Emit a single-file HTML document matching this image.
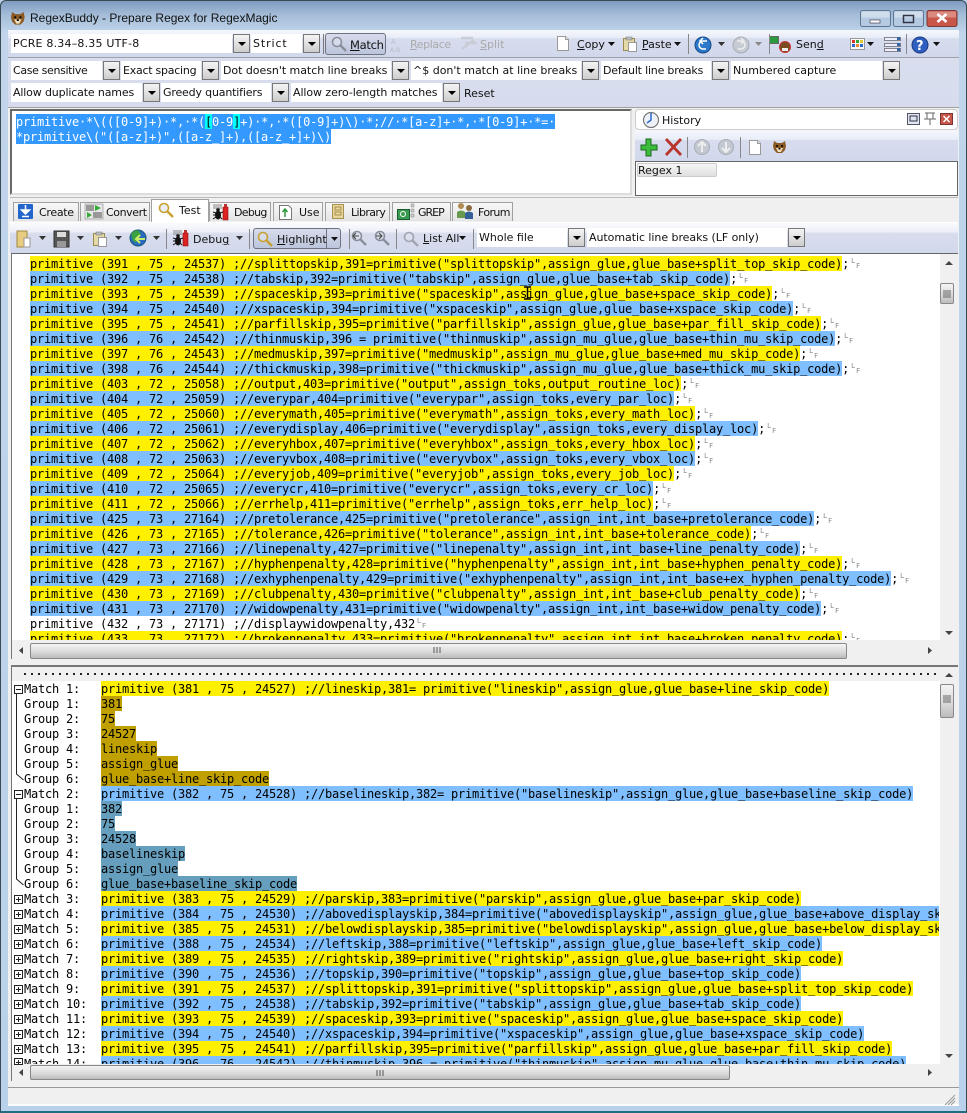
<!DOCTYPE html>
<html><head><meta charset="utf-8"><style>
html,body{margin:0;padding:0;width:967px;height:1113px;overflow:hidden;background:#b9d1ea}
div{position:absolute;box-sizing:border-box}
body{font:11px "DejaVu Sans","Liberation Sans",sans-serif;color:#111}
.c{background:#fff;height:19px;line-height:20px;padding-left:2px;white-space:pre}
.b{width:17px;height:19px;border:1px solid #777;background:linear-gradient(#f4f4f4,#cdcdcd)}
.b:after{content:"";position:absolute;left:4px;top:7px;border:4px solid transparent;border-top:4px solid #000;border-bottom:0}
.t{white-space:pre;line-height:15px;height:15px}
.g{color:#aaa}
.tab{top:202px;height:19px;background:linear-gradient(#f8f8f8,#e4e4e4);border:1px solid #a0a0a0;border-bottom:0}
.m{position:absolute;font:12px/17px "DejaVu Sans Mono","Liberation Mono",monospace;letter-spacing:-.224px;color:#000;overflow:hidden}
.r{position:static;height:15px;white-space:pre}
.r span{display:inline-block;height:15px;vertical-align:top}
.y{background:#fff000}.l{background:#80bfff}.dy{background:#bfa000}.dl{background:#669fbd}
em{display:inline-block;position:relative;width:13px;height:15px;vertical-align:top;font:normal 7px/7px "DejaVu Sans",sans-serif;color:#888;letter-spacing:0}
em i{position:absolute;left:2px;top:2px;font-style:normal}em b{position:absolute;left:7px;top:7px;font-weight:normal}
.lb{display:inline-block;width:77px;height:15px;vertical-align:top;font-style:normal}
.sb{background:#f0f0f0}
.th{background:linear-gradient(#f4f4f4,#d8d8d8 60%,#bcbcbc);border:1px solid #888;border-radius:2px}
</style></head><body>
<!-- frame -->
<div style="left:0;top:0;width:967px;height:1113px;background:linear-gradient(#7e9cc0 0,#a5bdd8 14px,#c0d5ea 32px,#b9d1ea 100%);border:1px solid #3a4a55;border-radius:6px 6px 0 0;border-bottom:2px solid #1f6f80"></div>
<div style="left:8px;top:30px;width:951px;height:1075px;background:#f0f0f0"></div>
<!-- toolbars -->
<div style="left:8px;top:30px;width:951px;height:28px;background:linear-gradient(#f5f7fc 0,#e9edf7 28%,#d7dcee 32%,#d2d8ec 100%);border-bottom:1px solid #a0a0a8"></div>
<div style="left:8px;top:58px;width:951px;height:50px;background:linear-gradient(#d9deef,#d6dcee);border-bottom:1px solid #a0a0a0"></div>
<div class="c" style="left:11px;top:34px;width:221px;letter-spacing:.2px">PCRE 8.34–8.35 UTF-8</div><div class="b" style="left:233px;top:34px"></div>
<div class="c" style="left:251px;top:34px;width:51px;letter-spacing:.9px">Strict</div><div class="b" style="left:303px;top:34px"></div>
<div style="left:323px;top:34px;width:1px;height:20px;background:#777"></div>
<div style="left:325px;top:33px;width:61px;height:22px;background:linear-gradient(#d7dcec,#bcc5dc);border:1px solid #6f7480;border-radius:3px"></div>
<div class="t" style="left:350px;top:38px;font-size:11.5px;letter-spacing:-.3px"><u>M</u>atch</div>
<div class="t g" style="left:410px;top:37px;letter-spacing:-.4px"><u>R</u>eplace</div>
<div class="t g" style="left:480px;top:37px"><u>S</u>plit</div>
<div class="t" style="left:577px;top:37px"><u>C</u>opy</div>
<div class="t" style="left:642px;top:37px"><u>P</u>aste</div>
<div class="t" style="left:796px;top:37px">Sen<u>d</u></div>
<!-- row 2 -->
<div class="c" style="left:11px;top:61px;width:91px;letter-spacing:-.35px">Case sensitive</div><div class="b" style="left:103px;top:61px"></div>
<div class="c" style="left:121px;top:61px;width:80px;letter-spacing:-.25px">Exact spacing</div><div class="b" style="left:202px;top:61px"></div>
<div class="c" style="left:221px;top:61px;width:170px;letter-spacing:-.04px">Dot doesn't match line breaks</div><div class="b" style="left:392px;top:61px"></div>
<div class="c" style="left:411px;top:61px;width:170px">^$ don't match at line breaks</div><div class="b" style="left:582px;top:61px"></div>
<div class="c" style="left:601px;top:61px;width:110px;letter-spacing:-.2px">Default line breaks</div><div class="b" style="left:712px;top:61px"></div>
<div class="c" style="left:731px;top:61px;width:151px">Numbered capture</div><div class="b" style="left:883px;top:61px"></div>
<div class="c" style="left:11px;top:83px;width:131px;letter-spacing:-.15px">Allow duplicate names</div><div class="b" style="left:143px;top:83px"></div>
<div class="c" style="left:161px;top:83px;width:110px;letter-spacing:-.17px">Greedy quantifiers</div><div class="b" style="left:272px;top:83px"></div>
<div class="c" style="left:291px;top:83px;width:151px;letter-spacing:-.08px">Allow zero-length matches</div><div class="b" style="left:443px;top:83px"></div>
<div class="t" style="left:464px;top:86px">Reset</div>
<!-- regex editor -->
<div style="left:10px;top:109px;width:622px;height:86px;background:#fff;border:2px solid #6a6a6a;border-right:2px solid #ddd;border-bottom:2px solid #ddd"></div>
<div class="m" style="left:16px;top:114px;width:600px;height:30px;color:#fff"><div class="r"><span style="background:#3399ff">primitive·*\(([0-9]+)·*,·*(<span style="background:#00ffff;color:#000">[</span>0-9<span style="background:#00ffff;color:#000">]</span>+)·*,·*([0-9]+)\)·*;//·*[a-z]+·*,·*[0-9]+·*=·</span></div><div class="r"><span style="background:#3399ff">*primitive\("([a-z]+)",([a-z_]+),([a-z_+]+)\)</span></div></div>
<!-- history -->
<div style="left:635px;top:109px;width:323px;height:21px;background:#fff;border:1px solid #ccc;border-radius:4px"></div>
<div class="t" style="left:662px;top:113px">History</div>
<div style="left:635px;top:130px;width:323px;height:31px;background:linear-gradient(#f5f7fc 0,#e9edf7 30%,#d7dcee 34%,#d2d8ec)"></div>
<div style="left:635px;top:161px;width:323px;height:35px;background:#fff;border:1px solid #666"></div>
<div style="left:637px;top:163px;width:80px;height:14px;background:linear-gradient(#f6f6f6,#e0e0e0);border:1px solid #ccc;border-radius:2px"></div>
<div class="t" style="left:638px;top:163px">Regex 1</div>
<!-- tabs -->
<div style="left:10px;top:197px;width:948px;height:1px;background:#bbb"></div>
<div style="left:10px;top:198px;width:948px;height:24px;background:#f0f0f0"></div>
<div class="tab" style="left:13px;width:66px"></div>
<div class="tab" style="left:80px;width:70px"></div>
<div class="tab" style="left:209px;width:62px"></div>
<div class="tab" style="left:273px;width:50px"></div>
<div class="tab" style="left:325px;width:65px"></div>
<div class="tab" style="left:392px;width:59px"></div>
<div class="tab" style="left:452px;width:61px"></div>
<div class="tab" style="left:151px;top:199px;width:58px;height:24px;background:#fff"></div>
<div class="t" style="left:39px;top:205px;letter-spacing:-.3px">Create</div>
<div class="t" style="left:106px;top:205px;letter-spacing:-.4px">Convert</div>
<div class="t" style="left:179px;top:203px">Test</div>
<div class="t" style="left:234px;top:205px;letter-spacing:-.7px">Debug</div>
<div class="t" style="left:299px;top:205px">Use</div>
<div class="t" style="left:351px;top:205px;letter-spacing:-.6px">Library</div>
<div class="t" style="left:418px;top:205px;letter-spacing:-1px">GREP</div>
<div class="t" style="left:478px;top:205px;letter-spacing:-.6px">Forum</div>
<!-- test toolbar -->
<div style="left:10px;top:222px;width:948px;height:31px;background:linear-gradient(#fbfbfe 0,#eef0f8 28%,#d8dded 36%,#d2d8ec);border-top:1px solid #fff"></div>
<div style="left:253px;top:228px;width:74px;height:21px;background:linear-gradient(#d7dcec,#bcc5dc);border:1px solid #6f7480;border-radius:3px 0 0 3px"></div>
<div style="left:327px;top:228px;width:14px;height:21px;background:linear-gradient(#d7dcec,#bcc5dc);border:1px solid #6f7480;border-left:0;border-radius:0 3px 3px 0"></div>
<div class="t" style="left:193px;top:232px">Debu<u>g</u></div>
<div class="t" style="left:277px;top:232px"><u>H</u>ighlight</div>
<div class="t" style="left:423px;top:231px"><u>L</u>ist All</div>
<div class="c" style="left:477px;top:228px;width:90px">Whole file</div><div class="b" style="left:568px;top:228px"></div>
<div class="c" style="left:587px;top:228px;width:200px;letter-spacing:-.05px">Automatic line breaks (LF only)</div><div class="b" style="left:788px;top:228px"></div>
<!-- top pane -->
<div style="left:11px;top:253px;width:947px;height:406px;background:#fff;border-top:1px solid #666;border-left:1px solid #777"></div>
<div class="m" style="left:30px;top:256px;width:909px;height:384px">
<div class="r"><span class="y">primitive (391 , 75 , 24537) ;//splittopskip,391=primitive("splittopskip",assign_glue,glue_base+split_top_skip_code)</span>;<em><i>L</i><b>F</b></em></div>
<div class="r"><span class="l">primitive (392 , 75 , 24538) ;//tabskip,392=primitive("tabskip",assign_glue,glue_base+tab_skip_code)</span>;<em><i>L</i><b>F</b></em></div>
<div class="r"><span class="y">primitive (393 , 75 , 24539) ;//spaceskip,393=primitive("spaceskip",assign_glue,glue_base+space_skip_code)</span>;<em><i>L</i><b>F</b></em></div>
<div class="r"><span class="l">primitive (394 , 75 , 24540) ;//xspaceskip,394=primitive("xspaceskip",assign_glue,glue_base+xspace_skip_code)</span>;<em><i>L</i><b>F</b></em></div>
<div class="r"><span class="y">primitive (395 , 75 , 24541) ;//parfillskip,395=primitive("parfillskip",assign_glue,glue_base+par_fill_skip_code)</span>;<em><i>L</i><b>F</b></em></div>
<div class="r"><span class="l">primitive (396 , 76 , 24542) ;//thinmuskip,396 = primitive("thinmuskip",assign_mu_glue,glue_base+thin_mu_skip_code)</span>;<em><i>L</i><b>F</b></em></div>
<div class="r"><span class="y">primitive (397 , 76 , 24543) ;//medmuskip,397=primitive("medmuskip",assign_mu_glue,glue_base+med_mu_skip_code)</span>;<em><i>L</i><b>F</b></em></div>
<div class="r"><span class="l">primitive (398 , 76 , 24544) ;//thickmuskip,398=primitive("thickmuskip",assign_mu_glue,glue_base+thick_mu_skip_code)</span>;<em><i>L</i><b>F</b></em></div>
<div class="r"><span class="y">primitive (403 , 72 , 25058) ;//output,403=primitive("output",assign_toks,output_routine_loc)</span>;<em><i>L</i><b>F</b></em></div>
<div class="r"><span class="l">primitive (404 , 72 , 25059) ;//everypar,404=primitive("everypar",assign_toks,every_par_loc)</span>;<em><i>L</i><b>F</b></em></div>
<div class="r"><span class="y">primitive (405 , 72 , 25060) ;//everymath,405=primitive("everymath",assign_toks,every_math_loc)</span>;<em><i>L</i><b>F</b></em></div>
<div class="r"><span class="l">primitive (406 , 72 , 25061) ;//everydisplay,406=primitive("everydisplay",assign_toks,every_display_loc)</span>;<em><i>L</i><b>F</b></em></div>
<div class="r"><span class="y">primitive (407 , 72 , 25062) ;//everyhbox,407=primitive("everyhbox",assign_toks,every_hbox_loc)</span>;<em><i>L</i><b>F</b></em></div>
<div class="r"><span class="l">primitive (408 , 72 , 25063) ;//everyvbox,408=primitive("everyvbox",assign_toks,every_vbox_loc)</span>;<em><i>L</i><b>F</b></em></div>
<div class="r"><span class="y">primitive (409 , 72 , 25064) ;//everyjob,409=primitive("everyjob",assign_toks,every_job_loc)</span>;<em><i>L</i><b>F</b></em></div>
<div class="r"><span class="l">primitive (410 , 72 , 25065) ;//everycr,410=primitive("everycr",assign_toks,every_cr_loc)</span>;<em><i>L</i><b>F</b></em></div>
<div class="r"><span class="y">primitive (411 , 72 , 25066) ;//errhelp,411=primitive("errhelp",assign_toks,err_help_loc)</span>;<em><i>L</i><b>F</b></em></div>
<div class="r"><span class="l">primitive (425 , 73 , 27164) ;//pretolerance,425=primitive("pretolerance",assign_int,int_base+pretolerance_code)</span>;<em><i>L</i><b>F</b></em></div>
<div class="r"><span class="y">primitive (426 , 73 , 27165) ;//tolerance,426=primitive("tolerance",assign_int,int_base+tolerance_code)</span>;<em><i>L</i><b>F</b></em></div>
<div class="r"><span class="l">primitive (427 , 73 , 27166) ;//linepenalty,427=primitive("linepenalty",assign_int,int_base+line_penalty_code)</span>;<em><i>L</i><b>F</b></em></div>
<div class="r"><span class="y">primitive (428 , 73 , 27167) ;//hyphenpenalty,428=primitive("hyphenpenalty",assign_int,int_base+hyphen_penalty_code)</span>;<em><i>L</i><b>F</b></em></div>
<div class="r"><span class="l">primitive (429 , 73 , 27168) ;//exhyphenpenalty,429=primitive("exhyphenpenalty",assign_int,int_base+ex_hyphen_penalty_code)</span>;<em><i>L</i><b>F</b></em></div>
<div class="r"><span class="y">primitive (430 , 73 , 27169) ;//clubpenalty,430=primitive("clubpenalty",assign_int,int_base+club_penalty_code)</span>;<em><i>L</i><b>F</b></em></div>
<div class="r"><span class="l">primitive (431 , 73 , 27170) ;//widowpenalty,431=primitive("widowpenalty",assign_int,int_base+widow_penalty_code)</span>;<em><i>L</i><b>F</b></em></div>
<div class="r">primitive (432 , 73 , 27171) ;//displaywidowpenalty,432<em><i>L</i><b>F</b></em></div>
<div class="r"><span class="y">primitive (433 , 73 , 27172) ;//brokenpenalty,433=primitive("brokenpenalty",assign_int,int_base+broken_penalty_code)</span>;<em><i>L</i><b>F</b></em></div>
</div>
<div class="sb" style="left:940px;top:254px;width:18px;height:386px"></div>
<div class="th" style="left:940px;top:283px;width:14px;height:21px"></div>
<div class="sb" style="left:12px;top:640px;width:946px;height:19px"></div>
<div class="th" style="left:30px;top:643px;width:817px;height:16px"></div>
<!-- splitter -->
<div style="left:10px;top:659px;width:948px;height:6px;background:#f0f0f0"></div>
<!-- bottom pane -->
<div style="left:11px;top:665px;width:947px;height:416px;background:#fff;border-top:2px solid #777;border-left:1px solid #777"></div>
<div style="left:12px;top:667px;width:928px;height:14px;background:#f0f0f0"></div>
<div style="left:24px;top:673px;width:915px;height:2px;background:repeating-linear-gradient(90deg,#222 0,#222 2px,transparent 2px,transparent 7px)"></div>
<div class="m" style="left:24px;top:681px;width:915px;height:383px">
<div class="r"><i class="lb">Match 1:</i><span class="y">primitive (381 , 75 , 24527) ;//lineskip,381= primitive("lineskip",assign_glue,glue_base+line_skip_code)</span></div>
<div class="r"><i class="lb">Group 1:</i><span class="dy">381</span></div>
<div class="r"><i class="lb">Group 2:</i><span class="dy">75</span></div>
<div class="r"><i class="lb">Group 3:</i><span class="dy">24527</span></div>
<div class="r"><i class="lb">Group 4:</i><span class="dy">lineskip</span></div>
<div class="r"><i class="lb">Group 5:</i><span class="dy">assign_glue</span></div>
<div class="r"><i class="lb">Group 6:</i><span class="dy">glue_base+line_skip_code</span></div>
<div class="r"><i class="lb">Match 2:</i><span class="l">primitive (382 , 75 , 24528) ;//baselineskip,382= primitive("baselineskip",assign_glue,glue_base+baseline_skip_code)</span></div>
<div class="r"><i class="lb">Group 1:</i><span class="dl">382</span></div>
<div class="r"><i class="lb">Group 2:</i><span class="dl">75</span></div>
<div class="r"><i class="lb">Group 3:</i><span class="dl">24528</span></div>
<div class="r"><i class="lb">Group 4:</i><span class="dl">baselineskip</span></div>
<div class="r"><i class="lb">Group 5:</i><span class="dl">assign_glue</span></div>
<div class="r"><i class="lb">Group 6:</i><span class="dl">glue_base+baseline_skip_code</span></div>
<div class="r"><i class="lb">Match 3:</i><span class="y">primitive (383 , 75 , 24529) ;//parskip,383=primitive("parskip",assign_glue,glue_base+par_skip_code)</span></div>
<div class="r"><i class="lb">Match 4:</i><span class="l">primitive (384 , 75 , 24530) ;//abovedisplayskip,384=primitive("abovedisplayskip",assign_glue,glue_base+above_display_skip_code)</span></div>
<div class="r"><i class="lb">Match 5:</i><span class="y">primitive (385 , 75 , 24531) ;//belowdisplayskip,385=primitive("belowdisplayskip",assign_glue,glue_base+below_display_skip_code)</span></div>
<div class="r"><i class="lb">Match 6:</i><span class="l">primitive (388 , 75 , 24534) ;//leftskip,388=primitive("leftskip",assign_glue,glue_base+left_skip_code)</span></div>
<div class="r"><i class="lb">Match 7:</i><span class="y">primitive (389 , 75 , 24535) ;//rightskip,389=primitive("rightskip",assign_glue,glue_base+right_skip_code)</span></div>
<div class="r"><i class="lb">Match 8:</i><span class="l">primitive (390 , 75 , 24536) ;//topskip,390=primitive("topskip",assign_glue,glue_base+top_skip_code)</span></div>
<div class="r"><i class="lb">Match 9:</i><span class="y">primitive (391 , 75 , 24537) ;//splittopskip,391=primitive("splittopskip",assign_glue,glue_base+split_top_skip_code)</span></div>
<div class="r"><i class="lb">Match 10:</i><span class="l">primitive (392 , 75 , 24538) ;//tabskip,392=primitive("tabskip",assign_glue,glue_base+tab_skip_code)</span></div>
<div class="r"><i class="lb">Match 11:</i><span class="y">primitive (393 , 75 , 24539) ;//spaceskip,393=primitive("spaceskip",assign_glue,glue_base+space_skip_code)</span></div>
<div class="r"><i class="lb">Match 12:</i><span class="l">primitive (394 , 75 , 24540) ;//xspaceskip,394=primitive("xspaceskip",assign_glue,glue_base+xspace_skip_code)</span></div>
<div class="r"><i class="lb">Match 13:</i><span class="y">primitive (395 , 75 , 24541) ;//parfillskip,395=primitive("parfillskip",assign_glue,glue_base+par_fill_skip_code)</span></div>
<div class="r"><i class="lb">Match 14:</i><span class="l">primitive (396 , 76 , 24542) ;//thinmuskip,396 = primitive("thinmuskip",assign_mu_glue,glue_base+thin_mu_skip_code)</span></div>
</div>
<div class="sb" style="left:940px;top:667px;width:18px;height:398px"></div>
<div class="th" style="left:940px;top:684px;width:14px;height:34px"></div>
<div class="sb" style="left:12px;top:1064px;width:946px;height:17px"></div>
<div class="th" style="left:30px;top:1065px;width:700px;height:15px"></div>
<!-- status -->
<div style="left:8px;top:1081px;width:951px;height:6px;background:#f0f0f0"></div>
<div style="left:8px;top:1087px;width:951px;height:1px;background:#999"></div>
<div style="left:8px;top:1104px;width:951px;height:2px;background:#fff"></div>
<!-- icons -->
<svg width="967" height="1113" viewBox="0 0 967 1113" style="position:absolute;left:0;top:0">
<defs>
<g id="mag"><circle cx="6" cy="6" r="4.5" fill="#dde3ef" fill-opacity=".6" stroke="currentColor" stroke-width="1.6"/><path d="M9.5 9.5L15 15" stroke="currentColor" stroke-width="2.4"/></g>
<g id="tri"><path d="M0 0h7L3.5 4z" fill="currentColor"/></g>
<g id="face"><path d="M1 1l3 2h5l3-2 1 5-1 4-3 3H4L1 10 0 6z" fill="#8a5a24"/><path d="M3 8h7l-2 4H5z" fill="#f0e0c0"/><circle cx="4" cy="6" r="1" fill="#000"/><circle cx="9" cy="6" r="1" fill="#000"/><path d="M5.5 8h2v1.500h-2z" fill="#000"/></g>
<g id="doc"><path d="M.5.5h8l3 3v11H.5z" fill="#fff" stroke="#999"/><path d="M8.500.5v3h3" fill="#eee" stroke="#999"/></g>
<g id="clip"><path d="M.5 2.500h11v12H.5z" fill="#e6d9a8" stroke="#9a8a50"/><path d="M3 1h6v3H3z" fill="#bbb" stroke="#777" stroke-width=".6"/><path d="M5.500 6.500h8v9h-8z" fill="#fff" stroke="#999"/></g>
<g id="bug"><path d="M10 3h5v13h-5z" fill="#d22" stroke="#811" stroke-width=".6"/><path d="M11 0h3v3h-3z" fill="#b33"/><ellipse cx="5" cy="11" rx="3" ry="4.500" fill="#111"/><circle cx="5" cy="5.500" r="1.800" fill="#111"/><path d="M0 8l3 1M0 11h2M0 15l3-2M10 8l-3 1M7 13l2 2" stroke="#111"/><path d="M0 0h9v5H0z" fill="#888" fill-opacity=".5"/></g>
</defs>
<!-- app icon + title -->
<use href="#face" transform="translate(11 11) scale(1.05)"/>
<!-- caption buttons -->
<g>
<rect x="860.500" y="10.500" width="30" height="16" rx="2" fill="#b4c9e2" stroke="#5d7590"/><rect x="861.500" y="11.500" width="28" height="6" fill="#cfdcec"/><rect x="870" y="20" width="10" height="3" fill="#fff" stroke="#445" stroke-width=".7"/>
<rect x="893.500" y="10.500" width="30" height="16" rx="2" fill="#b4c9e2" stroke="#5d7590"/><rect x="894.500" y="11.500" width="28" height="6" fill="#cfdcec"/><rect x="903.500" y="15.500" width="10" height="7" fill="none" stroke="#334" stroke-width="1.500"/>
<rect x="927" y="10.500" width="30" height="16" rx="2" fill="#c8574a" stroke="#7a3a38"/><rect x="928" y="11.500" width="28" height="6" fill="#dc8a80"/><path d="M937.500 14l9 8M946.500 14l-9 8" stroke="#fff" stroke-width="2.600"/>
</g>
<!-- toolbar icons -->
<use href="#mag" color="#8a8f9c" transform="translate(331 36)"/>
<text x="391" y="44" font-size="7" font-family="DejaVu Sans" fill="#b8bcc6">A</text><text x="390" y="52" font-size="6" font-family="DejaVu Sans" fill="#b8bcc6">A;B</text>
<path d="M461 38h12M465 43h12M462 49l12-9" stroke="#c8ccd6" stroke-width="2.500" fill="none"/>
<use href="#doc" transform="translate(557 36)"/>
<use href="#clip" transform="translate(623 36)"/>
<use href="#tri" color="#111" transform="translate(608 42)"/><use href="#tri" color="#111" transform="translate(674 42)"/>
<circle cx="703" cy="45" r="8" fill="#2b78c8" stroke="#174a8a"/><path d="M707 41h-4a3.500 3.500 0 0 0 0 8h3M703 38l-3 3 3 3" stroke="#fff" stroke-width="1.500" fill="none"/>
<use href="#tri" color="#333" transform="translate(718 42)"/>
<circle cx="741" cy="45" r="8" fill="#c6cad2" stroke="#a8acb6"/><path d="M737 41h4a3.500 3.500 0 0 1 0 8h-3M741 38l3 3-3 3" stroke="#eee" stroke-width="1.500" fill="none"/>
<use href="#tri" color="#888" transform="translate(755 42)"/>
<path d="M769.500 36.500h9v7h-9z" fill="#2b9a3c" stroke="#666"/>
<circle cx="785" cy="47" r="5.500" fill="#7a4a20"/><circle cx="785" cy="47" r="5.500" fill="none" stroke="#c33" stroke-width="1"/><path d="M782 48h6v3h-6z" fill="#eee"/>
<rect x="850.500" y="38.500" width="14" height="11" fill="#f8f8f8" stroke="#999"/><path d="M852 40h3v3h-3z" fill="#d33"/><path d="M856 40h3v3h-3z" fill="#3a3"/><path d="M860 40h3v3h-3z" fill="#dc3"/><path d="M852 44h3v3h-3z" fill="#36c"/><path d="M856 44h3v3h-3z" fill="#e83"/><path d="M860 44h3v3h-3z" fill="#36c"/>
<use href="#tri" color="#111" transform="translate(867 42)"/>
<path d="M884.500 37.500h16v3h-16zM884.500 43.500h16v3h-16zM884.500 48.500h16v3h-16z" fill="#eef" stroke="#666" stroke-width=".8"/><path d="M897 37h3v3h-3zM897 43h3v3h-3zM897 48h3v3h-3z" fill="#36a"/>
<circle cx="920" cy="45" r="8" fill="#2e5fc0" stroke="#1c3a80"/><text x="916" y="50" font-size="13" font-weight="bold" font-family="DejaVu Sans" fill="#fff">?</text>
<use href="#tri" color="#111" transform="translate(933 42)"/>
<path d="M688.500 34v20M769.500 34v20M906.500 34v20" stroke="#888" fill="none"/>
<!-- history icons -->
<circle cx="651" cy="120" r="7.500" fill="#eef2f8" stroke="#777" stroke-width="1.200"/><path d="M651 113v7l-4 3" stroke="#2a6acc" stroke-width="1.500" fill="none"/>
<rect x="907.500" y="113.500" width="12" height="11" fill="#dfe6f0" stroke="#556"/><rect x="910" y="116" width="7" height="5" fill="none" stroke="#334"/>
<path d="M925 113h10M927 113v6h6v-6M924 119h12M930 119v6" stroke="#666" fill="none"/>
<rect x="940.500" y="113.500" width="12" height="11" fill="#c8574a" stroke="#733"/><path d="M943.500 116l6 6M949.500 116l-6 6" stroke="#fff" stroke-width="1.500"/>
<path d="M646 139h5v6h6v5h-6v6h-5v-6h-5v-5h5z" fill="#3dbb3d" stroke="#1a6a1a"/>
<path d="M666 139l15 16M681 139l-15 16" stroke="#b8342c" stroke-width="2.800"/>
<path d="M687.500 137v21M740.500 137v21" stroke="#888"/>
<circle cx="702" cy="147" r="7.500" fill="#c4c8d0" stroke="#a8acb6"/><path d="M702 152v-9M698 146l4-4 4 4" stroke="#eee" stroke-width="2" fill="none"/>
<circle cx="726" cy="147" r="7.500" fill="#c4c8d0" stroke="#a8acb6"/><path d="M726 142v9M722 148l4 4 4-4" stroke="#eee" stroke-width="2" fill="none"/>
<use href="#doc" transform="translate(749 140)"/>
<use href="#face" transform="translate(773 140)"/>
<!-- tab icons -->
<rect x="18" y="204" width="15" height="15" fill="#2266cc" rx="1"/><path d="M25.500 205v5M21.500 210h8l-4 4zM22 216.500h7" stroke="#fff" stroke-width="1.500" fill="#fff"/>
<rect x="85" y="204" width="18" height="15" fill="#e8e8e8" stroke="#888" stroke-width=".6"/><path d="M86 205h8v6h-8z" fill="#999"/><path d="M95 205l6 3-6 3z" fill="#3a3"/><path d="M87 212l5 3-5 3z" fill="#3a3"/><path d="M93 212h9v6h-9z" fill="#999"/>
<use href="#mag" color="#c8a030" transform="translate(158 202)"/>
<g transform="translate(213 204)"><use href="#bug"/></g>
<path d="M279.500 205.500h9l3 3v11h-12z" fill="#fff" stroke="#777"/><path d="M285 217v-7M282.500 212l2.500-3 2.500 3" stroke="#2a9a3a" stroke-width="1.500" fill="none"/>
<rect x="332.500" y="204.500" width="11" height="14" fill="#e8d79c" stroke="#a89050"/><path d="M335 207h6v3h-6zM335 212h6v3h-6z" fill="none" stroke="#a89050"/>
<rect x="397.500" y="209.500" width="12" height="10" fill="#3a9a50" stroke="#1a5a30"/><circle cx="403" cy="214" r="2.500" fill="none" stroke="#fff"/><path d="M411 204h3v3h-3zM411 209h3v3h-3zM411 214h3v3h-3z" fill="#ccc" stroke="#888" stroke-width=".5"/>
<circle cx="461" cy="206" r="3" fill="#b08a50"/><path d="M457 218v-6q4-3 8 0v6z" fill="#6a9a50"/><circle cx="469" cy="208" r="3" fill="#8a6a40"/><path d="M465 219v-6q4-3 8 0v6z" fill="#34609a"/>
<!-- test toolbar icons -->
<path d="M17 231h10v16H17z" fill="#e8cc80" stroke="#a08840"/><path d="M24 238h6v9h-6z" fill="#fff" stroke="#999"/>
<use href="#tri" color="#333" transform="translate(39 236)"/>
<path d="M54 231h15v16H54z" fill="#555" stroke="#333"/><path d="M57 232h9v5h-9z" fill="#ddd"/><path d="M57 241h9v6h-9z" fill="#999"/>
<use href="#tri" color="#333" transform="translate(77 236)"/>
<use href="#clip" transform="translate(93 231)"/>
<use href="#tri" color="#333" transform="translate(115 236)"/>
<circle cx="138" cy="238" r="8" fill="#2a6ac0" stroke="#1a5a7a"/><path d="M131 234q4-5 8-3l2 4-4 3-1 5-3-2z" fill="#3aa040"/><path d="M145 239h-8M140 235l-4 4 4 4" stroke="#c8ee66" stroke-width="2" fill="none"/>
<use href="#tri" color="#333" transform="translate(153 236)"/>
<path d="M166.500 229v20M249.500 229v20M349.500 229v20M396.500 229v20M473.500 229v20" stroke="#888"/>
<use href="#bug" transform="translate(173 230)"/>
<use href="#tri" color="#333" transform="translate(236 236)"/>
<use href="#mag" color="#c8a030" transform="translate(257 231)"/>
<use href="#tri" color="#111" transform="translate(331 237)"/>
<use href="#mag" color="#8a8f9c" transform="translate(351 230)"/><use href="#mag" color="#8a8f9c" transform="translate(374 230)"/>
<path d="M353 236h6M356 233l-3 3 3 3M376 236h6M379 233l3 3-3 3" stroke="#444" fill="none"/>
<use href="#mag" color="#a0a4b0" transform="translate(403 231)"/>
<use href="#tri" color="#111" transform="translate(459 236)"/>
<!-- scrollbar arrows -->
<path d="M945 265l4-4 4 4z" fill="#444"/><path d="M945 631l4 4 4-4z" fill="#444"/><path d="M945 677l4-4 4 4z" fill="#444"/><path d="M945 1054l4 4 4-4z" fill="#444"/>
<path d="M23 647v7l-4-3.500z" fill="#444"/><path d="M928 647v7l4-3.500z" fill="#444"/><path d="M23 1069v7l-4-3.500z" fill="#444"/><path d="M928 1069v7l4-3.500z" fill="#444"/>
<path d="M943 291h8M943 293h8M943 295h8M943 297h8M943 696h8M943 698h8M943 700h8M943 702h8" stroke="#666"/>
<path d="M434 647v6M437 647v6M440 647v6M377 1070v6M380 1070v6M383 1070v6" stroke="#555"/>
<!-- tree -->
<g fill="#fff" stroke="#222">
<rect x="14.500" y="685.500" width="8" height="8"/><rect x="14.500" y="790.500" width="8" height="8"/>
<rect x="14.500" y="895.500" width="8" height="8"/><rect x="14.500" y="910.500" width="8" height="8"/><rect x="14.500" y="925.500" width="8" height="8"/><rect x="14.500" y="940.500" width="8" height="8"/><rect x="14.500" y="955.500" width="8" height="8"/><rect x="14.500" y="970.500" width="8" height="8"/><rect x="14.500" y="985.500" width="8" height="8"/><rect x="14.500" y="1000.500" width="8" height="8"/><rect x="14.500" y="1015.500" width="8" height="8"/><rect x="14.500" y="1030.500" width="8" height="8"/><rect x="14.500" y="1045.500" width="8" height="8"/><rect x="14.500" y="1058.500" width="8" height="6"/>
</g>
<path d="M16 689.500h5M16 794.500h5M16 899.500h5M18.500 897v5M16 914.500h5M18.500 912v5M16 929.500h5M18.500 927v5M16 944.500h5M18.500 942v5M16 959.500h5M18.500 957v5M16 974.500h5M18.500 972v5M16 989.500h5M18.500 987v5M16 1004.500h5M18.500 1002v5M16 1019.500h5M18.500 1017v5M16 1034.500h5M18.500 1032v5M16 1049.500h5M18.500 1047v5M16 1062.500h5M18.500 1060v4" stroke="#222" fill="none"/>
<path d="M16.500 694v80l7 6M16.500 799v80l7 6" stroke="#222" fill="none"/>
<!-- cursor -->
<path d="M524 287h7M527.500 287v12M524 299h7" stroke="#000" stroke-width="1.500" fill="none"/>
<!-- resize grip -->
<path d="M948 1105l7-7M951 1105l4-4M945 1105l10-10" stroke="#999"/>
</svg>
<div class="t" style="left:30px;top:11px;font:12px/15px 'Liberation Sans',sans-serif">RegexBuddy - Prepare Regex for RegexMagic</div>
</body></html>
